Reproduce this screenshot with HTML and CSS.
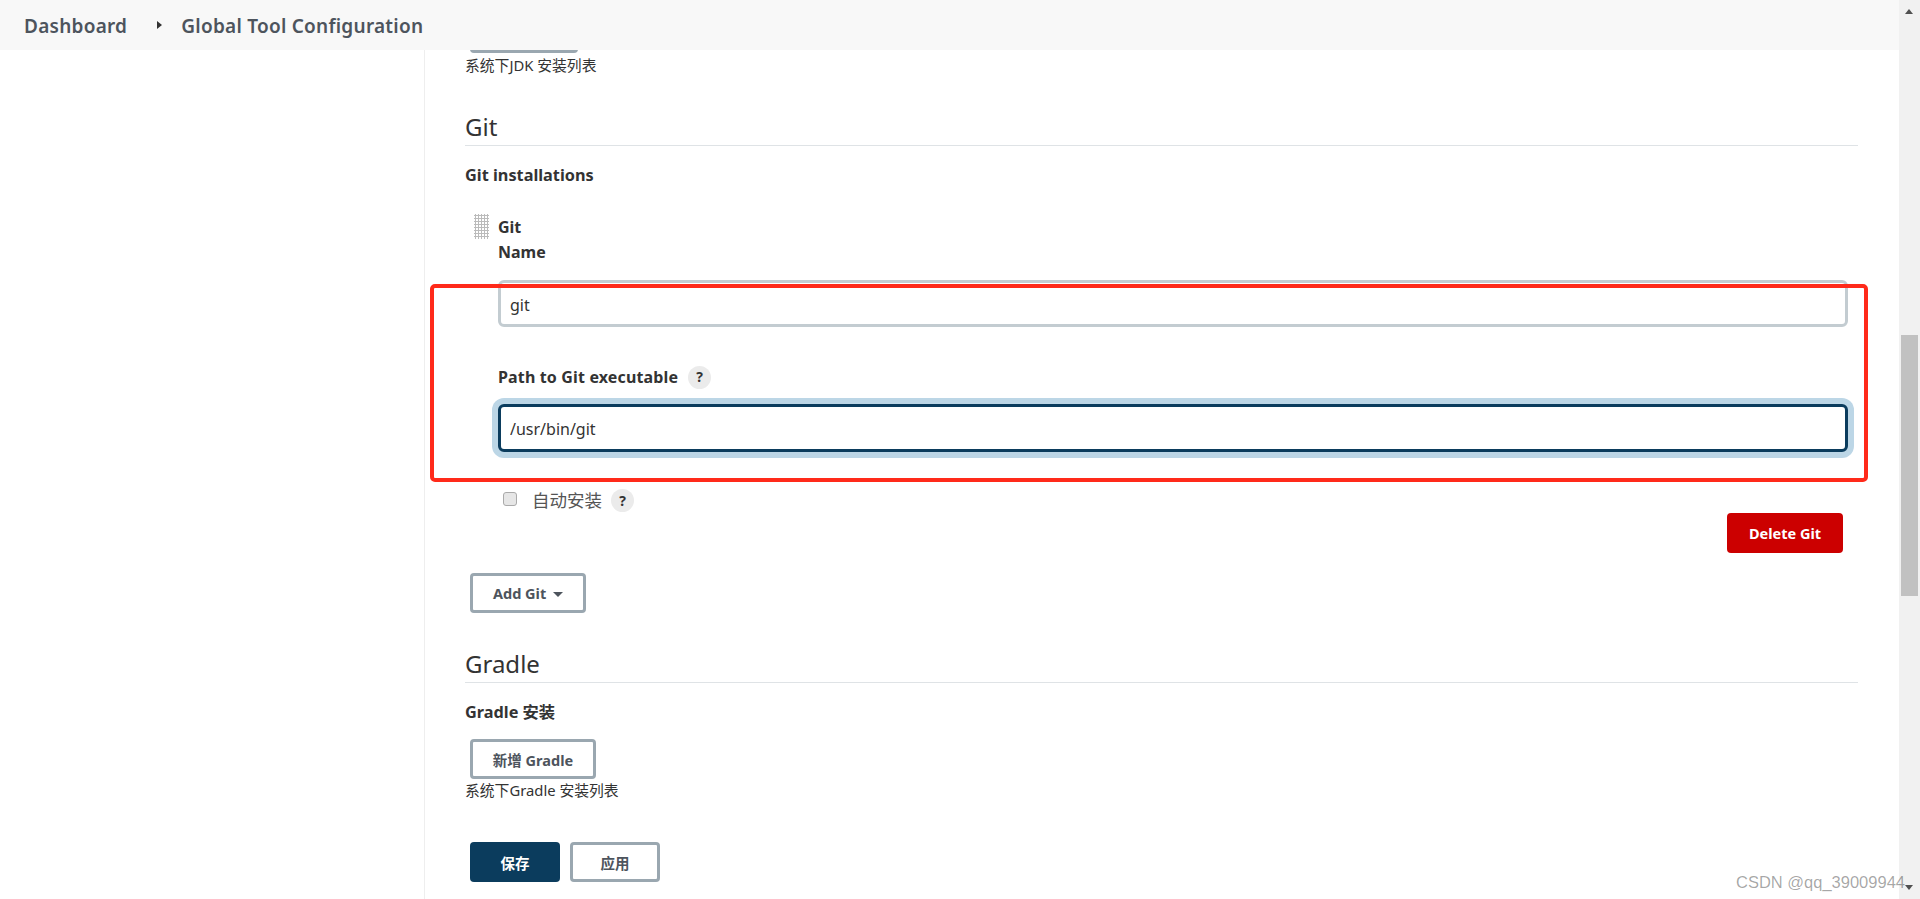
FILE: index.html
```html
<!DOCTYPE html>
<html lang="zh-CN">
<head>
  <meta charset="UTF-8">
  <title>Global Tool Configuration</title>
  <link rel="stylesheet" href="styles.css">
</head>
<body>
  <div class="page">
    <header class="breadcrumbs">
      <a class="crumb">Dashboard</a>
      <span class="crumb-arrow"></span>
      <a class="crumb">Global Tool Configuration</a>
    </header>

    <div class="layout">
      <aside class="sidebar"></aside>
      <main class="config">
        <button class="btn btn-jdk">新增 JDK</button>
        <p class="desc desc-jdk">系统下JDK 安装列表</p>

        <h2 class="section-title">Git</h2>
        <div class="setting-name">Git installations</div>

        <div class="item">
          <div class="handle"></div>
          <div class="item-body">
            <div class="item-title">Git</div>
            <label class="field-label">Name</label>
            <input class="text-input first-input" type="text" value="git">
            <div class="field-label path-label">
              Path to Git executable
              <span class="help">?</span>
            </div>
            <input class="text-input focused" type="text" value="/usr/bin/git">
            <div class="auto-row">
              <input class="checkbox" type="checkbox">
              <span class="auto-label">自动安装</span>
              <span class="help">?</span>
            </div>
            <div class="delete-row">
              <button class="btn btn-danger">Delete Git</button>
            </div>
          </div>
        </div>

        <button class="btn btn-add">Add Git <span class="caret"></span></button>

        <h2 class="section-title">Gradle</h2>
        <div class="setting-name">Gradle 安装</div>
        <button class="btn btn-gradle">新增 Gradle</button>
        <p class="desc">系统下Gradle 安装列表</p>

        <div class="actions">
          <button class="btn btn-save">保存</button>
          <button class="btn btn-apply">应用</button>
        </div>
      </main>
    </div>
  </div>

  <div class="scrollbar">
    <span class="arrow-up"></span>
    <div class="thumb"></div>
    <span class="arrow-down"></span>
  </div>

  <div class="annotation"></div>
  <div class="watermark">CSDN @qq_39009944</div>
</body>
</html>
```

FILE: styles.css
```css
* {
  box-sizing: border-box;
}
html, body {
  height: 100%;
}
body {
  margin: 0;
  display: flex;
  height: 899px;
  overflow: hidden;
  background: #fff;
  color: #333;
  font-family: "Noto Sans", "Noto Sans CJK SC", sans-serif;
  font-size: 14px;
}
.page {
  flex: 1;
  min-width: 0;
  display: flex;
  flex-direction: column;
}

/* top bar */
.breadcrumbs {
  position: relative;
  z-index: 2;
  flex: none;
  height: 50px;
  display: flex;
  align-items: center;
  padding: 2px 0 0 24px;
  background: #f8f8f8;
}
.crumb {
  font-size: 19px;
  font-weight: 600;
  letter-spacing: 0.25px;
  color: #4d545d;
}
.crumb-arrow {
  width: 0;
  height: 0;
  margin: 0 19px 3px 30px;
  border-left: 5px solid #333;
  border-top: 4px solid transparent;
  border-bottom: 4px solid transparent;
}

.layout {
  flex: 1;
  min-height: 0;
  display: flex;
}
.sidebar {
  flex: none;
  width: 425px;
  border-right: 1px solid #eee;
}
.config {
  flex: 1;
  min-width: 0;
  padding: 0 41px 0 40px;
}

/* buttons */
.btn {
  display: block;
  height: 40px;
  padding: 0;
  border: 3px solid #9aa7b0;
  border-radius: 4px;
  background: #fff;
  color: #4d545d;
  font-family: inherit;
  font-size: 14.5px;
  font-weight: 700;
}
.btn-jdk {
  width: 108px;
  margin: -37px 0 0 5px;
}
.btn-danger {
  width: 116px;
  border: none;
  background: #c00;
  color: #fff;
}
.btn-add {
  width: 116px;
  margin: 20px 0 0 5px;
}
.btn-gradle {
  width: 126px;
  margin: 17px 0 0 5px;
}
.btn-save {
  width: 90px;
  border: none;
  background: #0b3c5d;
  color: #fff;
}
.btn-apply {
  width: 90px;
}
.caret {
  display: inline-block;
  margin-left: 3px;
  vertical-align: 2px;
  border-top: 5px solid #4d545d;
  border-left: 5px solid transparent;
  border-right: 5px solid transparent;
}

.desc {
  margin: 1px 0 0;
  padding-bottom: 1px;
  font-size: 14.8px;
  line-height: 20px;
}
.desc-jdk {
  margin-top: 2px;
}
.section-title {
  margin: 35px 0 0;
  padding-bottom: 2px;
  border-bottom: 1px solid #dfe3e6;
  font-size: 24px;
  font-weight: 400;
  line-height: 32px;
}
.setting-name {
  margin-top: 19px;
  font-size: 16.3px;
  font-weight: 700;
  line-height: 20px;
  color: #333;
}

/* git installation block */
.item {
  display: flex;
  margin-top: 29px;
  padding-left: 9px;
}
.handle {
  flex: none;
  width: 15px;
  height: 25px;
  margin-right: 9px;
  background-image: radial-gradient(#bbb 1px, transparent 1.2px);
  background-size: 3px 3px;
}
.item-body {
  flex: 1;
  min-width: 0;
  padding-right: 10px;
}
.item-title,
.field-label {
  display: block;
  font-size: 16px;
  font-weight: 700;
  line-height: 24px;
}
.item-title {
  margin: 1px 0;
}
.text-input {
  display: block;
  width: 100%;
  height: 47px;
  padding: 2px 9px 0;
  border: 3px solid #c3ccd1;
  border-radius: 6px;
  background: #fff;
  color: #333;
  font-family: inherit;
  font-size: 16px;
}
.first-input {
  margin-top: 16px;
}
.path-label {
  display: flex;
  align-items: center;
  gap: 10px;
  margin-top: 38px;
  letter-spacing: 0.15px;
}
.focused {
  height: 48px;
  margin-top: 15px;
  border-color: #0b3c5d;
  box-shadow: 0 0 0 6px #bcd6e6;
}
.help {
  display: inline-flex;
  align-items: center;
  justify-content: center;
  width: 23px;
  height: 23px;
  border-radius: 50%;
  background: #ebebeb;
  color: #333;
  font-size: 14px;
  font-weight: 700;
}
.auto-row {
  display: flex;
  align-items: center;
  height: 23px;
  margin-top: 37px;
  padding-left: 5px;
}
.checkbox {
  appearance: none;
  width: 14px;
  height: 14px;
  margin: 0 15px 4px 0;
  border: 1px solid #aaa;
  border-radius: 3px;
  background: #e6e6e6;
}
.auto-label {
  margin-right: 9px;
  font-size: 17.5px;
  line-height: 23px;
  color: #555;
}
.delete-row {
  display: flex;
  justify-content: flex-end;
  margin-top: 1px;
  padding-right: 5px;
}

.actions {
  display: flex;
  gap: 10px;
  margin: 41px 0 0 5px;
}

/* fake page scrollbar */
.scrollbar {
  position: relative;
  flex: none;
  width: 21px;
  background: #f1f1f1;
}
.thumb {
  position: absolute;
  left: 2px;
  top: 335px;
  width: 17px;
  height: 261px;
  background: #c1c1c1;
}
.arrow-up,
.arrow-down {
  position: absolute;
  left: 6px;
  width: 0;
  height: 0;
  border-left: 4.5px solid transparent;
  border-right: 4.5px solid transparent;
}
.arrow-up {
  top: 9px;
  border-bottom: 5px solid #505050;
}
.arrow-down {
  bottom: 9px;
  border-top: 5px solid #505050;
}

/* hand-drawn red box on the screenshot */
.annotation {
  position: absolute;
  left: 430px;
  top: 284px;
  width: 1438px;
  height: 198px;
  border: 4px solid #ff2a1a;
  border-radius: 5px;
  pointer-events: none;
}
.watermark {
  position: absolute;
  right: 15px;
  top: 871px;
  color: rgba(0, 0, 0, 0.36);
  font-family: "Liberation Sans", sans-serif;
  font-size: 16.5px;
  line-height: 22px;
}
```
